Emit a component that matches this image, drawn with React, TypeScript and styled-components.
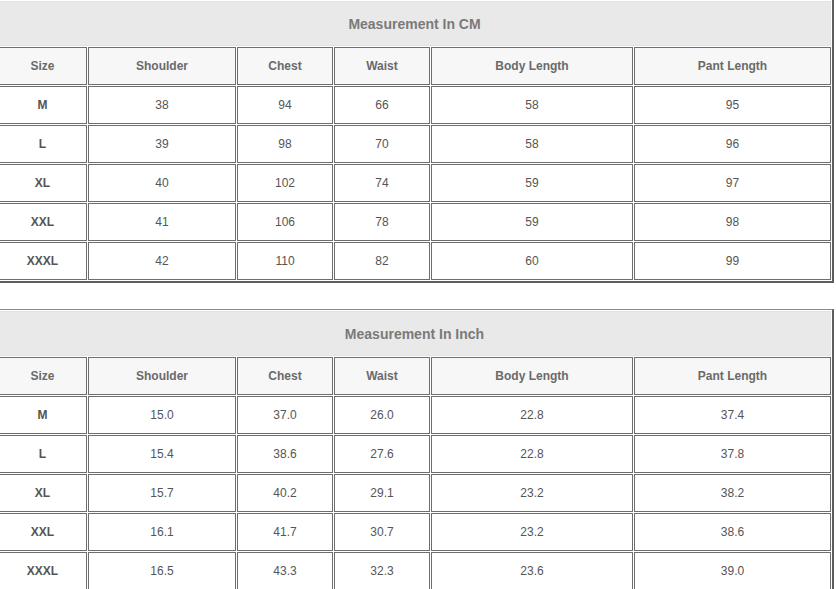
import React from "react"
import styled, { createGlobalStyle } from "styled-components"

// size chart data, one entry per table
const columns = ["Size", "Shoulder", "Chest", "Waist", "Body Length", "Pant Length"]

const charts = [
  {
    title: "Measurement In CM",
    rows: [
      ["M", "38", "94", "66", "58", "95"],
      ["L", "39", "98", "70", "58", "96"],
      ["XL", "40", "102", "74", "59", "97"],
      ["XXL", "41", "106", "78", "59", "98"],
      ["XXXL", "42", "110", "82", "60", "99"],
    ],
  },
  {
    title: "Measurement In Inch",
    rows: [
      ["M", "15.0", "37.0", "26.0", "22.8", "37.4"],
      ["L", "15.4", "38.6", "27.6", "22.8", "37.8"],
      ["XL", "15.7", "40.2", "29.1", "23.2", "38.2"],
      ["XXL", "16.1", "41.7", "30.7", "23.2", "38.6"],
      ["XXXL", "16.5", "43.3", "32.3", "23.6", "39.0"],
    ],
  },
]

const GlobalStyle = createGlobalStyle`
  html, body {
    margin: 0;
    padding: 0;
    background: #ffffff;
    overflow: hidden;
  }
  body {
    font-family: "Liberation Sans", Arial, sans-serif;
  }
`

function App() {
  return (
    <>
      <GlobalStyle />
      <Page>
        {charts.map((chart) => (
          <SizeTable key={chart.title}>
            <TitleCell>{chart.title}</TitleCell>
            {columns.map((c) => (
              <HeadCell key={c}>{c}</HeadCell>
            ))}
            {chart.rows.map((row) =>
              row.map((value, i) => (
                <Cell key={row[0] + i} $label={i === 0}>
                  {value}
                </Cell>
              ))
            )}
          </SizeTable>
        ))}
      </Page>
    </>
  )
}

export default App

// style
const Page = styled.div`
  display: flex;
  flex-direction: column;
  gap: 26px;
  margin: -1px 0 0 -4px;
`

const SizeTable = styled.div`
  display: grid;
  grid-template-columns: 89px 148px 96px 96px 202px 197px;
  grid-template-rows: 45px;
  grid-auto-rows: 38px;
  gap: 1px;
  padding: 1px;
  width: max-content;
  border-top: 1px solid #8a8a8a;
  border-left: 1px solid #8a8a8a;
  border-right: 2px solid #5e5e5e;
  border-bottom: 2px solid #5e5e5e;
  background: #ffffff;
`

const TitleCell = styled.div`
  grid-column: 1 / -1;
  box-sizing: border-box;
  display: flex;
  align-items: center;
  justify-content: center;
  background: #e9e9e9;
  border: 1px solid #e3e3e3;
  color: #7a7a7a;
  font-size: 14px;
  font-weight: bold;
`

const Cell = styled.div<{ $label?: boolean }>`
  box-sizing: border-box;
  display: flex;
  align-items: center;
  justify-content: center;
  border: 1px solid #6e6e6e;
  background: #ffffff;
  color: #555555;
  font-size: 12px;
  font-weight: ${(p) => (p.$label ? "bold" : "normal")};
`

const HeadCell = styled(Cell)`
  background: #f7f7f7;
  color: #6a6a6a;
  font-weight: bold;
`
